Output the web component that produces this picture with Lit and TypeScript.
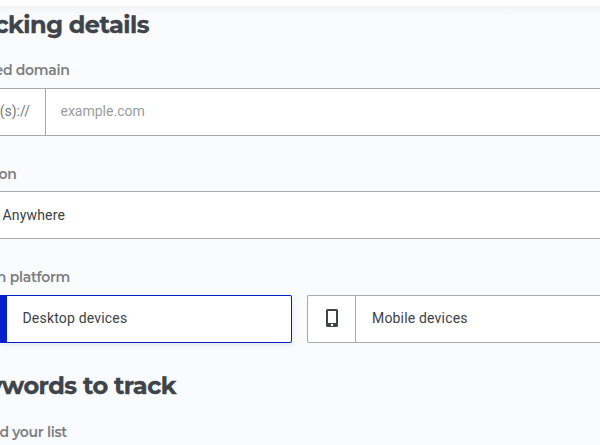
import { LitElement, html, css } from "lit";
import { customElement } from "lit/decorators.js";

@customElement("app-root")
export class AppRoot extends LitElement {
  static styles = css`
    :host {
      display: block;
      width: 600px;
      height: 445px;
      overflow: hidden;
      background: #fafbfd;
      color: #3c4248;
      font: 14px/20px Roboto, sans-serif;
    }
    * { box-sizing: border-box; }
    .topbar { height: 6px; background: #fff; }
    .page {
      height: 439px;
      background: linear-gradient(#eff0f2, #f5f6f8 3px, #fafbfd 10px);
    }
    h2, .label {
      margin: 0;
      display: flex;
      justify-content: flex-end;
      white-space: nowrap;
      font-family: Montserrat, Inter, sans-serif;
    }
    h2 {
      height: 38px;
      font-size: 24px;
      line-height: 38px;
      font-weight: 700;
      letter-spacing: -0.5px;
      -webkit-text-stroke: 0.35px #3e4449;
      color: #3e4449;
    }
    .label {
      height: 20px;
      font-size: 14px;
      line-height: 20px;
      font-weight: 600;
      letter-spacing: -0.3px;
      color: #7c7e82;
    }
    .details { width: 149px; }
    .domain { width: 69.5px; margin-top: 16px; }
    .location { width: 16.5px; margin-top: 28px; }
    .location + .field { margin-top: 7px; }
    .platform { width: 70px; margin-top: 28px; }
    .keywords { width: 176px; margin-top: 24px; }
    .list { width: 67px; margin-top: 17px; }
    .field {
      display: flex;
      align-items: center;
      height: 48px;
      margin-top: 8px;
      background: #fff;
      border: solid #a9a9a9;
      border-width: 1px 0;
    }
    .prefix {
      width: 46px;
      height: 100%;
      display: flex;
      align-items: center;
      justify-content: flex-end;
      padding: 0 15px 2px 0;
      border-right: 1px solid #a9a9a9;
      color: #777b7e;
    }
    .placeholder { padding: 0 0 2px 14.5px; color: #999da0; }
    .value { padding-left: 2.5px; letter-spacing: 0.18px; }
    .options { display: flex; gap: 15px; margin-top: 8px; }
    .option {
      display: flex;
      align-items: center;
      height: 48px;
      background: #fff;
      border: 1px solid #a9a9a9;
      border-radius: 2px;
      letter-spacing: 0.18px;
    }
    .name { padding-bottom: 2px; }
    .selected {
      width: 292px;
      border-color: #0620c8;
      border-left: 7px solid #0620c8;
      border-radius: 0 2px 2px 0;
      padding-left: 15.5px;
      box-shadow: 0 2px 6px rgba(30, 40, 60, 0.1);
    }
    .mobile { flex: 1; border-right: 0; border-radius: 2px 0 0 2px; }
    .icon {
      width: 48px;
      height: 100%;
      display: flex;
      align-items: center;
      justify-content: center;
      padding-bottom: 2px;
      border-right: 1px solid #a9a9a9;
      margin-right: 16px;
    }
    svg { display: block; }
  `;

  render() {
    return html`
      <div class="topbar"></div>
      <main class="page">
        <h2 class="details">cking details</h2>
        <div class="label domain">ed domain</div>
        <div class="field">
          <span class="prefix">(s)://</span>
          <span class="placeholder">example.com</span>
        </div>
        <div class="label location">on</div>
        <div class="field"><span class="value">Anywhere</span></div>
        <div class="label platform">n platform</div>
        <div class="options">
          <div class="option selected"><span class="name">Desktop devices</span></div>
          <div class="option mobile">
            <span class="icon">
              <svg width="12" height="18" viewBox="0 0 12 18">
                <path fill="#3e4449" fill-rule="evenodd" d="M1.5 0h9A1.5 1.5 0 0 1 12 1.5v15a1.5 1.5 0 0 1-1.5 1.5h-9A1.5 1.5 0 0 1 0 16.5v-15A1.5 1.5 0 0 1 1.5 0ZM2 2v12h8V2ZM6 14.8a1.2 1.2 0 1 0 0 2.4 1.2 1.2 0 0 0 0-2.4Z"/>
              </svg>
            </span>
            <span class="name">Mobile devices</span>
          </div>
        </div>
        <h2 class="keywords">ywords to track</h2>
        <div class="label list">d your list</div>
      </main>
    `;
  }
}
